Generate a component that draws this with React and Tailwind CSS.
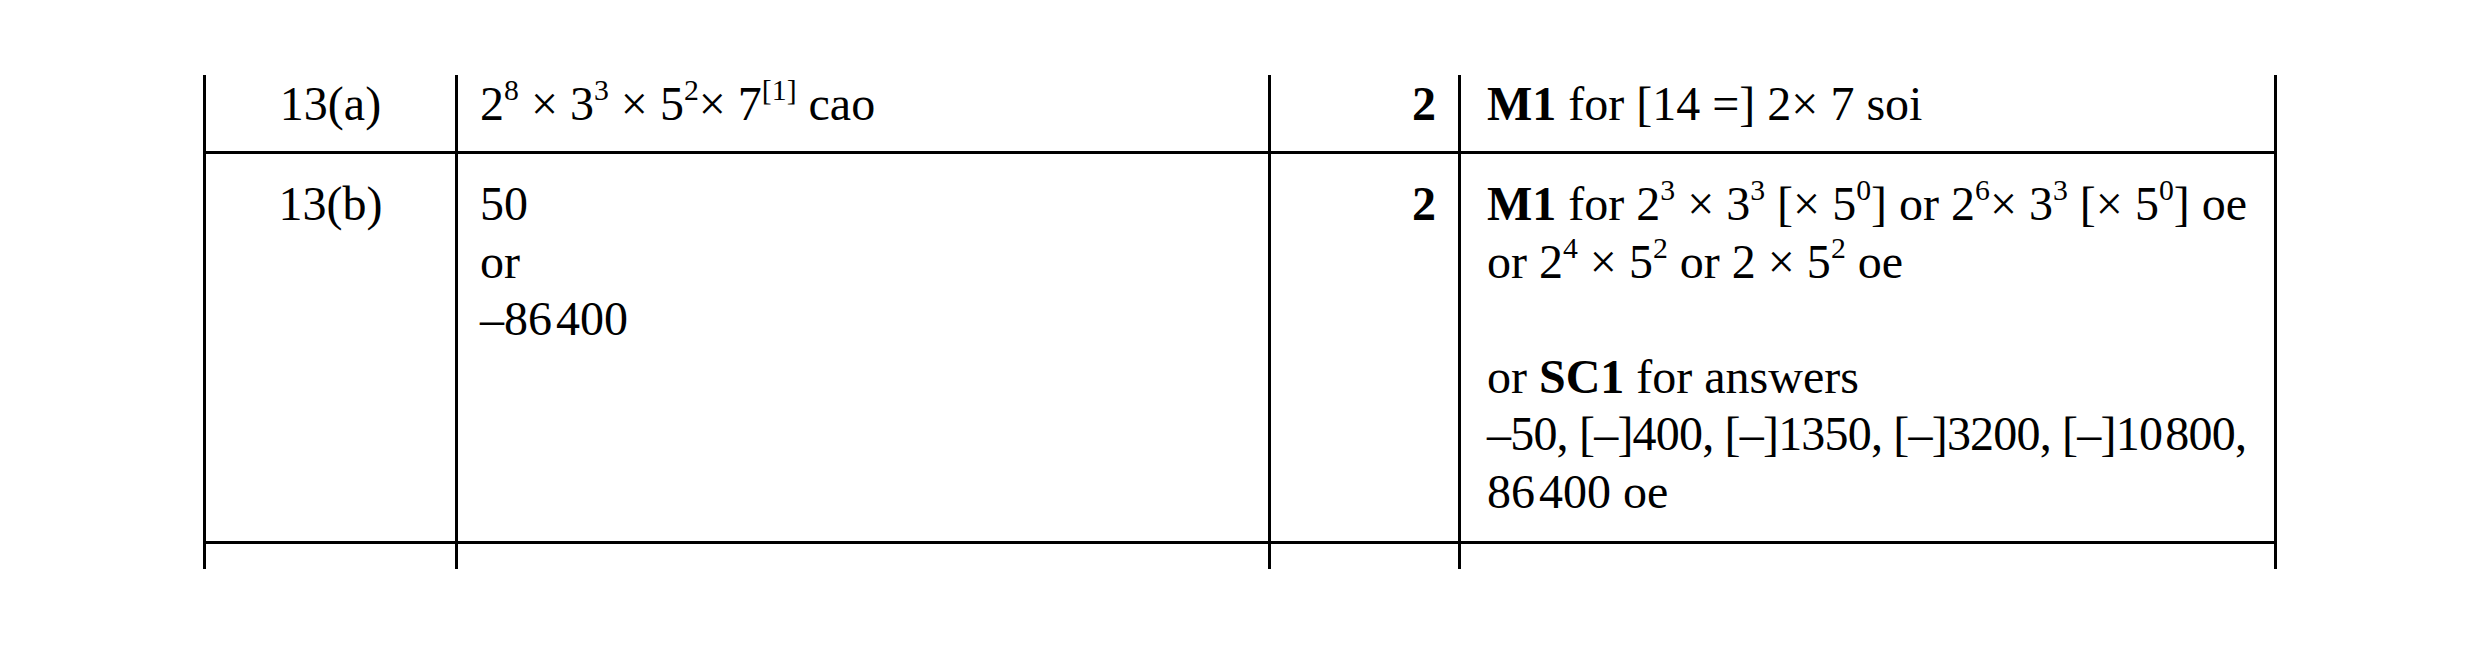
import React from 'react';

const Sup = ({ children }) => (
    <sup className="text-[0.62em] relative top-[-0.66em] leading-none">{children}</sup>
);

const Cell = ({ className = '', children }) => (
    <div className={`shrink-0 border-l-[3px] border-black ${className}`}>{children}</div>
);

const App = () => {
    return (
        <div className="w-[2480px] h-[648px] bg-white overflow-hidden pt-[75px] pl-[203px] text-black font-['Liberation_Serif',serif] text-[48px] leading-[57.5px]">
            <div className="w-[2074px] border-r-[3px] border-black">

                {/* row 13(a) */}
                <div className="flex h-[79px] border-b-[3px] border-black">
                    <Cell className="w-[252px] text-center">13(a)</Cell>
                    <Cell className="w-[813px] pl-[22px] whitespace-nowrap">
                        2<Sup>8</Sup> × 3<Sup>3</Sup> × 5<Sup>2</Sup>× 7<Sup>[1]</Sup> cao
                    </Cell>
                    <Cell className="w-[190px] pr-[22px] text-right font-bold">2</Cell>
                    <Cell className="w-[816px] pl-[26px] whitespace-nowrap">
                        <b>M1</b> for [14 =] 2× 7 soi
                    </Cell>
                </div>

                {/* row 13(b) */}
                <div className="flex h-[390px] border-b-[3px] border-black">
                    <Cell className="w-[252px] pt-[21px] text-center">13(b)</Cell>
                    <Cell className="w-[813px] pt-[21px] pl-[22px] flex flex-col">
                        <span>50</span>
                        <span>or</span>
                        <span>–86{'\u200A'}400</span>
                    </Cell>
                    <Cell className="w-[190px] pt-[21px] pr-[22px] text-right font-bold">2</Cell>
                    <Cell className="w-[816px] pt-[21px] pl-[26px] whitespace-nowrap flex flex-col">
                        <span>
                            <b>M1</b> for 2<Sup>3</Sup> × 3<Sup>3</Sup> [× 5<Sup>0</Sup>] or 2<Sup>6</Sup>× 3<Sup>3</Sup> [× 5<Sup>0</Sup>] oe
                        </span>
                        <span>
                            or 2<Sup>4</Sup> × 5<Sup>2</Sup> or 2 × 5<Sup>2</Sup> oe
                        </span>
                        <span className="h-[57.5px]"></span>
                        <span>
                            or <b>SC1</b> for answers
                        </span>
                        <span className="tracking-[-0.8px]">–50, [–]400, [–]1350, [–]3200, [–]10{'\u200A'}800,</span>
                        <span>86{'\u200A'}400 oe</span>
                    </Cell>
                </div>

                {/* next row, cut off */}
                <div className="flex h-[25px]">
                    <Cell className="w-[252px]" />
                    <Cell className="w-[813px]" />
                    <Cell className="w-[190px]" />
                    <Cell className="w-[816px]" />
                </div>
            </div>
        </div>
    );
};

export default App;
